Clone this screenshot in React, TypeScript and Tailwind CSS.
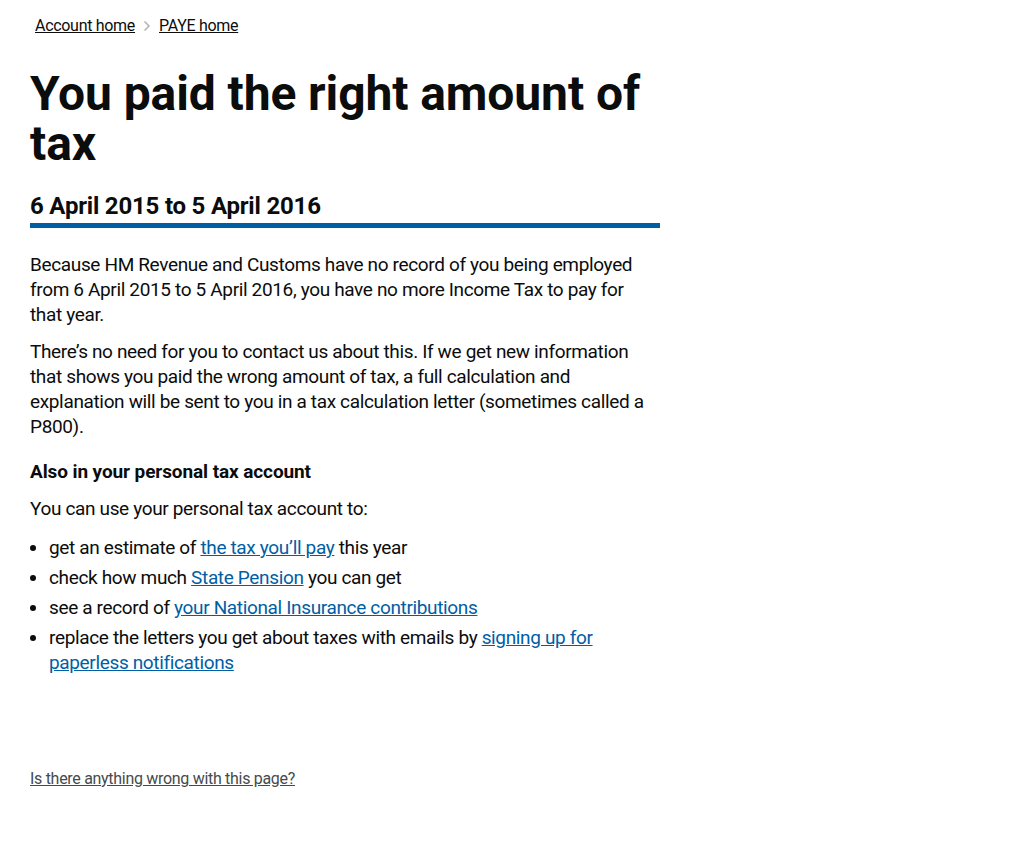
import React from "react";

const font = { fontFamily: "Roboto, 'Noto Sans', sans-serif" };

export default function App() {
  return (
    <div className="min-h-[853px] bg-white text-[#0b0c0c]" style={font}>
      <div className="px-[30px]">
        <nav className="pt-[16px] flex items-center text-[16px] leading-[20px] tracking-[-0.3px]">
          <a href="#" className="ml-[5px] underline text-[#0b0c0c]">Account home</a>
          <svg width="8" height="12" viewBox="0 0 8 12" className="mx-[8px]">
            <path d="M1.5 1.5 L6 6 L1.5 10.5" fill="none" stroke="#b1b4b6" strokeWidth="1.5" />
          </svg>
          <a href="#" className="underline text-[#0b0c0c]">PAYE home</a>
        </nav>
        <div className="w-[630px]">
          <h1 className="mt-[33px] text-[48px] leading-[50px] font-bold tracking-[-0.1px]">
            You paid the right amount of tax
          </h1>
          <h2 className="mt-[22px] text-[24px] leading-[30px] font-bold pb-[2px] border-b-[5px] border-[#005ea5] tracking-[-0.2px]">
            6 April 2015 to 5 April 2016
          </h2>
          <div className="mr-[6px] text-[19px] leading-[25px] tracking-[-0.35px]">
            <p className="mt-[24px]">
              Because HM Revenue and Customs have no record of you being employed from 6 April 2015 to 5 April 2016, you have no more Income Tax to pay for that year.
            </p>
            <p className="mt-[12px]">
              There’s no need for you to contact us about this. If we get new information that shows you paid the wrong amount of tax, a full calculation and explanation will be sent to you in a tax calculation letter (sometimes called a P800).
            </p>
            <h3 className="mt-[20px] font-bold tracking-[-0.1px]">Also in your personal tax account</h3>
            <p className="mt-[12px]">You can use your personal tax account to:</p>
            <ul className="mt-[14px] list-disc pl-[19px] flex flex-col gap-[5px]">
              <li>get an estimate of <a href="#" className="text-[#005ea5] underline">the tax you’ll pay</a> this year</li>
              <li>check how much <a href="#" className="text-[#005ea5] underline">State Pension</a> you can get</li>
              <li>see a record of <a href="#" className="text-[#005ea5] underline">your National Insurance contributions</a></li>
              <li>replace the letters you get about taxes with emails by <a href="#" className="text-[#005ea5] underline">signing up for paperless notifications</a></li>
            </ul>
          </div>
        </div>
        <div className="mt-[92px]">
          <a href="#" className="text-[16px] leading-[20px] tracking-[-0.3px] underline text-[#454a4c]">Is there anything wrong with this page?</a>
        </div>
      </div>
    </div>
  );
}
